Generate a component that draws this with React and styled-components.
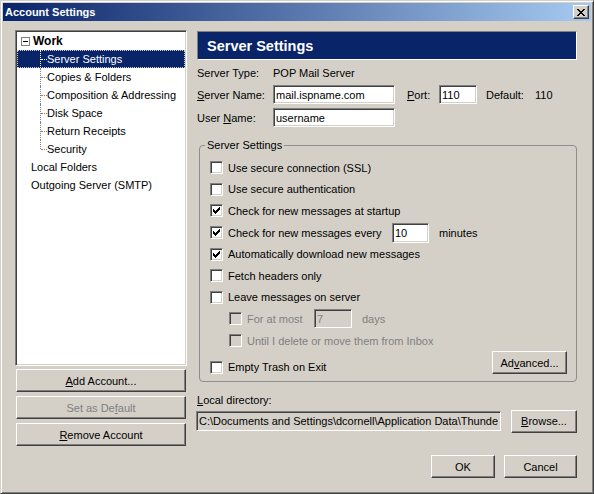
import React from 'react';
import styled, { createGlobalStyle, css } from 'styled-components';

const GlobalStyle = createGlobalStyle`
  html, body { margin: 0; padding: 0; background: #d4d0c8; }
  body { font-family: "Liberation Sans", Arial, sans-serif; font-size: 11px; color: #000; }
  * { box-sizing: border-box; }
`;

const raised = css`
  border: 1px solid;
  border-color: #fff #404040 #404040 #fff;
  box-shadow: inset -1px -1px #808080, inset 1px 1px #d4d0c8;
`;

const sunken = css`
  border: 1px solid;
  border-color: #808080 #fff #fff #808080;
  box-shadow: inset 1px 1px #404040, inset -1px -1px #d4d0c8;
`;

const Window = styled.div`
  width: 594px;
  height: 494px;
  background: #d4d0c8;
  border: 1px solid;
  border-color: #d4d0c8 #404040 #404040 #d4d0c8;
  box-shadow: inset 1px 1px #fff, inset -1px -1px #808080;
  padding: 2px;
  display: flex;
  flex-direction: column;
`;

const TitleBar = styled.div`
  height: 18px;
  flex-shrink: 0;
  display: flex;
  align-items: center;
  padding: 0 2px;
  background: linear-gradient(to right, #0a246a, #a6caf0);
  color: #fff;
  font-weight: bold;
  font-size: 11px;
`;

const CloseButton = styled.button`
  margin-left: auto;
  width: 16px;
  height: 14px;
  padding: 0;
  background: #d4d0c8;
  ${raised};
  display: flex;
  align-items: center;
  justify-content: center;
`;

const Body = styled.div`
  flex: 1;
  display: flex;
  flex-direction: column;
  padding: 9px 14px 13px 12px;
`;

const Main = styled.div`
  display: flex;
  gap: 10px;
  height: 416px;
`;

const LeftCol = styled.div`
  width: 172px;
  display: flex;
  flex-direction: column;
`;

const Tree = styled.div`
  height: 336px;
  background: #fff;
  ${sunken};
  padding: 1px;
`;

const TreeRow = styled.div`
  height: 18px;
  display: flex;
  align-items: center;
  white-space: nowrap;
  padding-left: ${p => p.$pad || 0}px;
  ${p => p.$selected && css`
    background: #0a246a;
    color: #fff;
    outline: 1px dotted #d4d0c8;
    outline-offset: -1px;
  `}
`;

const Guide = styled.span`
  position: relative;
  width: 30px;
  height: 18px;
  flex-shrink: 0;
  &::before {
    content: '';
    position: absolute;
    left: 23px;
    top: 0;
    bottom: ${p => (p.$last ? '9px' : '0')};
    border-left: 1px dotted ${p => (p.$selected ? '#ffffff' : '#808080')};
  }
  &::after {
    content: '';
    position: absolute;
    left: 24px;
    top: 9px;
    width: 6px;
    border-top: 1px dotted ${p => (p.$selected ? '#ffffff' : '#808080')};
  }
`;

const Twisty = styled.span`
  width: 9px;
  height: 9px;
  margin-left: 4px;
  margin-right: 3px;
  border: 1px solid #808080;
  background: #fff;
  display: flex;
  align-items: center;
  justify-content: center;
  flex-shrink: 0;
  &::after {
    content: '';
    width: 5px;
    height: 1px;
    background: #000;
  }
`;

const TreeBold = styled.span`
  font-weight: bold;
  font-size: 12px;
`;

const ButtonStack = styled.div`
  margin: 3px 1px 0;
  display: flex;
  flex-direction: column;
  gap: 4px;
`;

const Button = styled.button`
  height: 23px;
  width: ${p => (p.$w ? `${p.$w}px` : 'auto')};
  padding: 0;
  background: #d4d0c8;
  ${raised};
  font-family: "Liberation Sans", Arial, sans-serif;
  font-size: 11px;
  color: ${p => (p.disabled ? '#808080' : '#000')};
  flex-shrink: 0;
`;

const U = styled.span`
  text-decoration: underline;
`;

const RightCol = styled.div`
  width: 380px;
  display: flex;
  flex-direction: column;
`;

const Header = styled.div`
  margin-top: 1px;
  height: 29px;
  background: #0a246a;
  border: 1px solid;
  border-color: #808080 #fff #fff #808080;
  color: #fff;
  font-weight: bold;
  font-size: 14.5px;
  padding-left: 9px;
  display: flex;
  align-items: center;
`;

const InfoRow = styled.div`
  display: flex;
  align-items: center;
  height: ${p => p.$h}px;
  margin-top: ${p => p.$mt}px;
  white-space: nowrap;
`;

const Label = styled.span`
  width: ${p => (p.$w ? `${p.$w}px` : 'auto')};
  margin-left: ${p => p.$ml || 0}px;
  flex-shrink: 0;
  color: ${p => (p.$disabled ? '#808080' : 'inherit')};
`;

const TextInput = styled.input`
  width: ${p => p.$w}px;
  height: ${p => p.$h || 19}px;
  margin-left: ${p => p.$ml || 0}px;
  padding: 0 2px;
  ${sunken};
  background: ${p => (p.$grey ? '#d4d0c8' : '#fff')};
  color: ${p => (p.disabled ? '#808080' : '#000')};
  font-family: "Liberation Sans", Arial, sans-serif;
  font-size: 11px;
  outline: none;
  flex-shrink: 0;
`;

const Group = styled.fieldset`
  margin: 12px 0 0 2px;
  width: 378px;
  min-width: 0;
  border: 1px solid #8e8e8e;
  border-radius: 4px;
  padding: 5px 9px 3px 10px;
`;

const Legend = styled.legend`
  padding: 0 2px;
  margin-left: -5px;
  line-height: 13px;
  font-size: 11px;
`;

const CheckRow = styled.div`
  height: 21.6px;
  display: flex;
  align-items: center;
  white-space: nowrap;
  padding-left: ${p => p.$indent || 0}px;
  margin-top: ${p => p.$mt || 0}px;
  color: ${p => (p.$disabled ? '#808080' : '#000')};
`;

const Box = styled.span`
  width: 13px;
  height: 13px;
  flex-shrink: 0;
  ${sunken};
  background: ${p => (p.$disabled ? '#d4d0c8' : '#fff')};
  display: flex;
  align-items: center;
  justify-content: center;
  margin-right: 5px;
`;

const LastRow = styled.div`
  display: flex;
  justify-content: space-between;
  align-items: flex-start;
`;

const DirLabel = styled.div`
  margin-top: 12.5px;
  line-height: 13px;
`;

const DirRow = styled.div`
  margin-top: 2.5px;
  height: 23px;
  display: flex;
  align-items: center;
`;

const Footer = styled.div`
  margin-top: 9px;
  display: flex;
  justify-content: flex-end;
  gap: 9px;
`;

const CheckMark = () => (
  <svg width="7" height="7" viewBox="0 0 7 7" shapeRendering="crispEdges">
    <g fill="currentColor">
      <rect x="6" y="0" width="1" height="1" />
      <rect x="5" y="1" width="2" height="1" />
      <rect x="0" y="2" width="1" height="1" />
      <rect x="4" y="2" width="3" height="1" />
      <rect x="0" y="3" width="2" height="1" />
      <rect x="3" y="3" width="3" height="1" />
      <rect x="0" y="4" width="5" height="1" />
      <rect x="1" y="5" width="3" height="1" />
      <rect x="2" y="6" width="1" height="1" />
    </g>
  </svg>
);

const CloseGlyph = () => (
  <svg width="8" height="7" viewBox="0 0 8 7" shapeRendering="crispEdges">
    <g fill="#000">
      <rect x="0" y="0" width="2" height="1" />
      <rect x="6" y="0" width="2" height="1" />
      <rect x="1" y="1" width="2" height="1" />
      <rect x="5" y="1" width="2" height="1" />
      <rect x="2" y="2" width="4" height="1" />
      <rect x="3" y="3" width="2" height="1" />
      <rect x="2" y="4" width="4" height="1" />
      <rect x="1" y="5" width="2" height="1" />
      <rect x="5" y="5" width="2" height="1" />
      <rect x="0" y="6" width="2" height="1" />
      <rect x="6" y="6" width="2" height="1" />
    </g>
  </svg>
);

const Check = ({ checked, disabled, indent, mt, children }) => (
  <CheckRow $indent={indent} $disabled={disabled} $mt={mt}>
    <Box $disabled={disabled}>{checked && <CheckMark />}</Box>
    {children}
  </CheckRow>
);

const treeChildren = [
  'Server Settings',
  'Copies & Folders',
  'Composition & Addressing',
  'Disk Space',
  'Return Receipts',
  'Security',
];

export default function App() {
  return (
    <>
      <GlobalStyle />
      <Window>
        <TitleBar>
          Account Settings
          <CloseButton aria-label="Close">
            <CloseGlyph />
          </CloseButton>
        </TitleBar>
        <Body>
          <Main>
            <LeftCol>
              <Tree>
                <TreeRow>
                  <Twisty />
                  <TreeBold>Work</TreeBold>
                </TreeRow>
                {treeChildren.map((name, i) => (
                  <TreeRow key={name} $selected={i === 0}>
                    <Guide $last={i === treeChildren.length - 1} $selected={i === 0} />
                    {name}
                  </TreeRow>
                ))}
                <TreeRow $pad={14}>Local Folders</TreeRow>
                <TreeRow $pad={14}>Outgoing Server (SMTP)</TreeRow>
              </Tree>
              <ButtonStack>
                <Button><U>A</U>dd Account...</Button>
                <Button disabled>Set as De<U>f</U>ault</Button>
                <Button><U>R</U>emove Account</Button>
              </ButtonStack>
            </LeftCol>
            <RightCol>
              <Header>Server Settings</Header>
              <InfoRow $h={21} $mt={2}>
                <Label $w={76}>Server Type:</Label>
                <span>POP Mail Server</span>
              </InfoRow>
              <InfoRow $h={19} $mt={2}>
                <Label $w={76}><U>S</U>erver Name:</Label>
                <TextInput $w={122} readOnly defaultValue="mail.ispname.com" />
                <Label $w={32} $ml={12}><U>P</U>ort:</Label>
                <TextInput $w={38} readOnly defaultValue="110" />
                <Label $w={49} $ml={9}>Default:</Label>
                <span>110</span>
              </InfoRow>
              <InfoRow $h={19} $mt={4}>
                <Label $w={76}>User <U>N</U>ame:</Label>
                <TextInput $w={122} readOnly defaultValue="username" />
              </InfoRow>
              <Group>
                <Legend>Server Settings</Legend>
                <Check>Use secure connection (SSL)</Check>
                <Check>Use secure authentication</Check>
                <Check checked>Check for new messages at startup</Check>
                <Check checked>
                  <Label $w={164}>Check for new messages every</Label>
                  <TextInput $w={37} $h={20} readOnly defaultValue="10" />
                  <Label $ml={10}>minutes</Label>
                </Check>
                <Check checked>Automatically download new messages</Check>
                <Check>Fetch headers only</Check>
                <Check>Leave messages on server</Check>
                <Check disabled indent={19}>
                  <Label $w={67}>For at most</Label>
                  <TextInput $w={38} $h={19} $grey disabled readOnly defaultValue="7" />
                  <Label $ml={10}>days</Label>
                </Check>
                <Check disabled indent={19}>Until I delete or move them from Inbox</Check>
                <LastRow>
                  <Check mt={5}>Empty Trash on Exit</Check>
                  <Button $w={75}>Ad<U>v</U>anced...</Button>
                </LastRow>
              </Group>
              <DirLabel><U>L</U>ocal directory:</DirLabel>
              <DirRow>
                <TextInput
                  $w={305}
                  $h={20}
                  $ml={-1}
                  $grey
                  readOnly
                  defaultValue="C:\Documents and Settings\dcornell\Application Data\Thunderbird"
                />
                <Button $w={66} style={{ marginLeft: 'auto' }}><U>B</U>rowse...</Button>
              </DirRow>
            </RightCol>
          </Main>
          <Footer>
            <Button $w={64}>OK</Button>
            <Button $w={73}>Cancel</Button>
          </Footer>
        </Body>
      </Window>
    </>
  );
}
